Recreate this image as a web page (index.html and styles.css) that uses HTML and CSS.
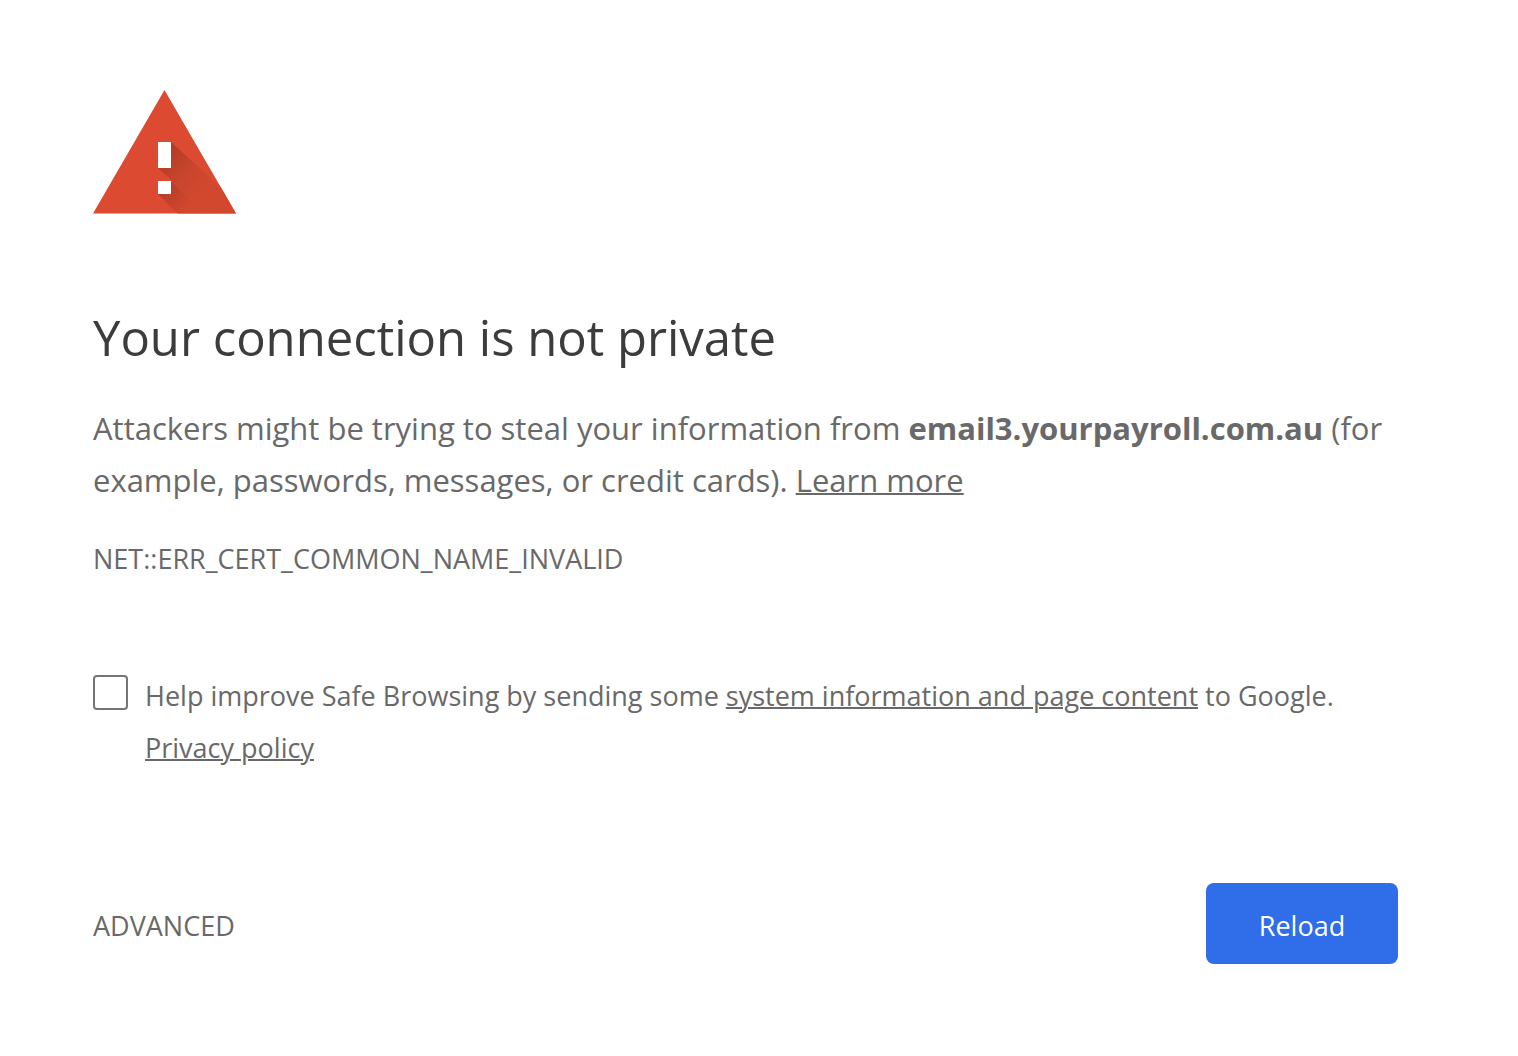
FILE: index.html
```
<!DOCTYPE html>
<html lang="en">
<head>
    <meta charset="UTF-8">
    <meta name="viewport" content="width=device-width, initial-scale=1.0">
    <title>Privacy error</title>
    <link rel="stylesheet" href="styles.css">
</head>
<body>
    <main class="container">
        <svg class="icon" viewBox="0 0 144 124" aria-hidden="true">
            <defs>
                <linearGradient id="shadow" gradientUnits="userSpaceOnUse" x1="70" y1="70" x2="105" y2="105">
                    <stop offset="0" stop-color="#b43d27"/>
                    <stop offset="0.5" stop-color="#c9452d"/>
                    <stop offset="1" stop-color="#d2482e"/>
                </linearGradient>
                <linearGradient id="shadowDot" gradientUnits="userSpaceOnUse" x1="70" y1="98" x2="92" y2="120">
                    <stop offset="0" stop-color="#b43d27"/>
                    <stop offset="1" stop-color="#d2482e"/>
                </linearGradient>
            </defs>
            <path fill="#db4a31" d="M71.500 0 143 123.500H0z"/>
            <path fill="url(#shadow)" d="M78 52 128 97.500 143 123.500H110L79 92V91L65 78z"/>
            <path fill="url(#shadowDot)" d="M78 91 110.500 123.500H84.500L65 104z"/>
            <path fill="#fff" d="M65 52h13v26H65zM65 91h13v13H65z"/>
        </svg>
        <h1>Your connection is not private</h1>
        <p class="message">Attackers might be trying to steal your information from <strong>email3.yourpayroll.com.au</strong> (for example, passwords, messages, or credit cards). <a href="#">Learn more</a></p>
        <div class="error-code">NET::ERR_CERT_COMMON_NAME_INVALID</div>
        <div class="opt-in">
            <input type="checkbox" id="optIn">
            <label for="optIn">Help improve Safe Browsing by sending some <a href="#">system information and page content</a> to Google. <a href="#">Privacy policy</a></label>
        </div>
        <div class="buttons">
            <button type="button" class="advanced-btn">ADVANCED</button>
            <button type="button" class="reload-btn">Reload</button>
        </div>
    </main>
</body>
</html>
```
FILE: styles.css
```
body {
    font-family: "Open Sans", "Noto Sans", sans-serif;
    background-color: #fff;
    color: #696969;
    margin: 0;
}
.container {
    max-width: 1305px;
    margin: 0 120px 0 93px;
    padding: 90px 0;
}
.icon {
    display: block;
    width: 144px;
    height: 124px;
}
h1 {
    margin: 92px 0 34px;
    color: #3c3c3c;
    font-size: 49px;
    font-weight: 400;
    line-height: 62px;
}
a {
    color: inherit;
    text-decoration: underline;
    text-decoration-thickness: 2px;
}
.message {
    margin: 0;
    font-size: 31px;
    line-height: 52px;
}
.error-code {
    margin-top: 27px;
    font-size: 27px;
    line-height: 52px;
}
.opt-in {
    display: flex;
    gap: 17px;
    margin-top: 85px;
    font-size: 27px;
    line-height: 52px;
}
.opt-in input {
    appearance: none;
    box-sizing: border-box;
    flex: none;
    width: 35px;
    height: 35px;
    margin: 5px 0 0;
    border: 2px solid #757575;
    border-radius: 4px;
    background-color: #fff;
}
.buttons {
    display: flex;
    justify-content: space-between;
    align-items: center;
    margin-top: 109px;
}
button {
    padding: 24px 0 20px;
    border: none;
    font-family: inherit;
    font-size: 27px;
    line-height: 37px;
    cursor: pointer;
}
.advanced-btn {
    color: #696969;
    background: none;
}
.reload-btn {
    min-width: 192px;
    color: #fff;
    background-color: #2f6de9;
    border-radius: 8px;
}
```
